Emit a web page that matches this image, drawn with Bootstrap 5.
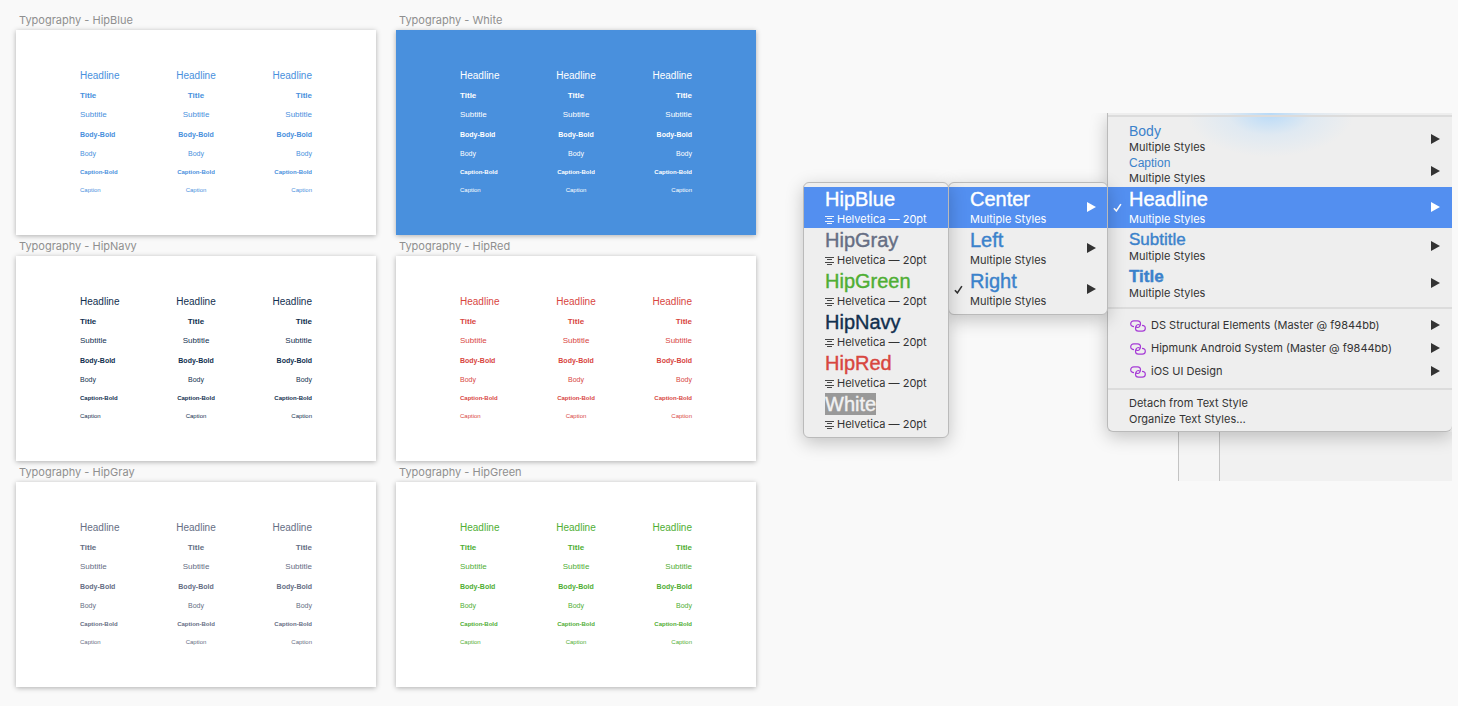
<!DOCTYPE html>
<html lang="en">
<head>
<meta charset="utf-8">
<meta name="viewport" content="width=device-width, initial-scale=1">
<title>Typography styles</title>
<link rel="stylesheet" href="https://cdn.jsdelivr.net/npm/bootstrap@5.3.0/dist/css/bootstrap.min.css">
<style>
  :root { --ui: Inter, "Liberation Sans", sans-serif; --type: "Liberation Sans", Arial, sans-serif; }
  body { background: #f9f9f9; font-family: var(--ui); }

  /* Artboards */
  .page-area { padding: 12px 6px 16px 16px; gap: 23px; }
  .boards { display: grid; grid-template-columns: 1fr 1fr; column-gap: 20px; row-gap: 3px; }
  .board-name { font-size: 11px; line-height: 16px; height: 18px; color: #8f8f8f; padding-left: 3px; margin: 0; font-weight: 400; }
  .artboard { background: #fff; height: 205px; padding: 35px 64px 0; box-shadow: 0 1px 5px rgba(0,0,0,.3); font-family: var(--type); }
  .specimen { display: grid; grid-template-columns: 1fr 1fr 1fr; line-height: 19px; }
  .specimen > :nth-child(3n+2) { text-align: center; }
  .specimen > :nth-child(3n) { text-align: right; }
  .t-headline { font-size: 10px; line-height: 21px; }
  .t-title { font-size: 8px; font-weight: 700; }
  .t-subtitle { font-size: 8px; line-height: 20px; }
  .t-bodybold { font-size: 7px; font-weight: 700; }
  .t-body { font-size: 7px; }
  .t-capbold { font-size: 6px; font-weight: 700; line-height: 18px; }
  .t-cap { font-size: 6px; line-height: 18px; }
  .c-blue { color: #4990dd; } .c-white { color: #fff; } .artboard.c-white { background: #4990dd; }
  .c-navy { color: #12304f; } .c-red { color: #d8463f; }
  .c-gray { color: #666e84; } .c-green { color: #4fae34; }

  /* Menus */
  .stage { margin-top: 101px; padding-left: 24px; overflow: hidden; }
  .menu-panel { background: #eee; border: 1px solid #bababa; border-radius: 6px; padding: 4px 0; box-shadow: 0 5px 18px rgba(0,0,0,.22); position: relative; }
  .menu-panel.sub { margin-top: 69px; }
  .m-colors { width: 146px; z-index: 3; }
  .m-align { width: 160px; z-index: 2; margin-left: -1px; }
  .m-main { width: 345px; z-index: 1; border-width: 0 0 1px 1px; border-radius: 0 0 6px 6px; padding: 2px 0 4px;
    background: radial-gradient(ellipse 84px 44px at 162px 0, #b8daf8, rgba(214,230,244,.6) 50%, rgba(238,238,238,0)) #eee; }
  .main-col { margin-left: -1px; }
  .item { display: grid; grid-template-columns: 21px 1fr 20px; align-items: center; width: 100%; border: 0; background: none; padding: 0; text-align: left; color: #333; }
  .m-main .item { grid-template-columns: 21px 1fr 21px; }
  .item.on { background: #538ff0; color: #fff; }
  .tick-cell { padding-left: 5px; }
  .arrow-icon { margin-bottom: 1px; }
  .lines-icon { margin-right: 3px; }
  .chain-icon { margin: 0 5px 0 1px; }
  .nm { display: block; font-family: var(--type); font-size: 20px; line-height: 25px; -webkit-text-stroke: .4px; }
  .sb { display: block; font-size: 11px; line-height: 15px; padding-bottom: 1px; white-space: nowrap; }
  .n-body { font-size: 14px; line-height: 17px; -webkit-text-stroke: 0; }
  .n-cap { font-size: 12px; line-height: 15px; -webkit-text-stroke: 0; }
  .n-sub, .n-title { font-size: 17px; line-height: 19px; padding-top: 2px; }
  .n-title { font-weight: 700; }
  .link-c { color: #3b82cb; }
  .rule { height: 2px; background: #dcdcdc; margin: 5px 0; border: 0; opacity: 1; }
  .rule:first-child { margin: 0 0 6px; }
  .lib { height: 23px; font-size: 11px; }
  .act { display: block; width: 100%; border: 0; background: none; padding: 0 0 0 21px; text-align: left; font-size: 11px; line-height: 16px; color: #333; }
  .sel { background: #999; color: #f2f2f2; }
  svg { display: block; }
  .canvas-strip { height: 49px; display: grid; grid-template-columns: 71px 41px 1fr; }
  .ruler { background: #f5f5f5; border-left: 1px solid #c4c4c4; }
  .canvas-bg { background: #f1f1f1; border-left: 1px solid #c4c4c4; }
</style>
<script src="https://cdn.jsdelivr.net/npm/bootstrap@5.3.0/dist/js/bootstrap.bundle.min.js"></script>
</head>
<body>
<svg width="0" height="0" class="position-absolute" aria-hidden="true">
  <symbol id="arrow" viewBox="0 0 9 10"><path d="M0 0L9 5L0 10Z" fill="currentColor"/></symbol>
  <symbol id="tick" viewBox="0 0 8 8"><path d="M.8 4.6L3 7L7 1" fill="none" stroke="currentColor" stroke-width="1.4"/></symbol>
  <symbol id="lines" viewBox="0 0 9 8"><path d="M0 .5H9M2 2.5H7M0 5.5H9M2 7.5H7" stroke="currentColor" stroke-width=".9"/></symbol>
  <symbol id="chain" viewBox="0 0 16 12"><path d="M4 6.600C2 6.600 .7 5.400 .7 3.700S2 .8 3.800 .8H7.600C9.400 .8 10.500 2.200 10.500 3.800S9.400 7.500 7.700 7.500C6.700 7.500 6.300 7 6.300 6.500M12 5.400C14 5.400 15.300 6.600 15.300 8.300S14 11.200 12.200 11.200H8.400C6.600 11.200 5.500 9.800 5.500 8.200S6.600 4.500 8.300 4.500C9.300 4.500 9.700 5 9.700 5.500" fill="none" stroke="#a63bd6" stroke-width="1.2"/></symbol>
</svg>
<main class="page-area d-flex align-items-start">
  <section class="boards flex-grow-1" id="boards"></section>
  <section class="stage d-flex align-items-start flex-shrink-0">
    <div class="menu-panel sub m-colors" id="colors"></div>
    <div class="menu-panel sub m-align" id="aligns"></div>
    <div class="main-col">
      <div class="menu-panel m-main" id="mainmenu"></div>
      <div class="canvas-strip"><span></span><span class="ruler"></span><span class="canvas-bg"></span></div>
    </div>
  </section>
</main>
<script>
const steps = [['t-headline','Headline'],['t-title','Title'],['t-subtitle','Subtitle'],['t-bodybold','Body-Bold'],['t-body','Body'],['t-capbold','Caption-Bold'],['t-cap','Caption']];
document.getElementById('boards').innerHTML = [['HipBlue','c-blue'],['White','c-white'],['HipNavy','c-navy'],['HipRed','c-red'],['HipGray','c-gray'],['HipGreen','c-green']].map(([n,c]) =>
  `<article><h2 class="board-name">Typography - ${n}</h2><div class="artboard ${c}"><div class="specimen">${steps.map(([k,t]) => `<span class="${k}">${t}</span>`.repeat(3)).join('')}</div></div></article>`).join('');
const icon = (id,w,h) => `<svg width="${w}" height="${h}" class="${id}-icon" aria-hidden="true"><use href="#${id}"/></svg>`;
const item = (name, cls, sub, o={}) => `<button type="button" class="item ${o.on?'on':''}"><span class="tick-cell">${o.tick?icon('tick',9,9):''}</span><span><span class="nm ${cls}">${o.sel?`<span class="sel">${name}</span>`:name}</span><span class="sb">${sub}</span></span><span>${o.arrow?icon('arrow',9,10):''}</span></button>`;
const font = `<span class="d-flex align-items-center">${icon('lines',9,8)}Helvetica — 20pt</span>`;
document.getElementById('colors').innerHTML = [['HipBlue','',{on:1}],['HipGray','c-gray'],['HipGreen','c-green'],['HipNavy','c-navy'],['HipRed','c-red'],['White','',{sel:1}]].map(([n,c,o]) => item(n,c,font,o)).join('');
const M = 'Multiple Styles';
document.getElementById('aligns').innerHTML = item('Center','',M,{on:1,arrow:1}) + item('Left','link-c',M,{arrow:1}) + item('Right','link-c',M,{tick:1,arrow:1});
const lib = t => `<button type="button" class="item lib"><span></span><span class="d-flex align-items-center">${icon('chain',16,12)}${t}</span>${icon('arrow',9,10)}</button>`;
document.getElementById('mainmenu').innerHTML = `<hr class="rule">` + item('Body','link-c n-body',M,{arrow:1}) + item('Caption','link-c n-cap',M,{arrow:1}) +
  item('Headline','',M,{on:1,tick:1,arrow:1}) + item('Subtitle','link-c n-sub',M,{arrow:1}) + item('Title','link-c n-title',M,{arrow:1}) +
  `<hr class="rule">` + lib('DS Structural Elements (Master @ f9844bb)') + lib('Hipmunk Android System (Master @ f9844bb)') + lib('iOS UI Design') +
  `<hr class="rule"><button type="button" class="act">Detach from Text Style</button><button type="button" class="act">Organize Text Styles…</button>`;
</script>
</body>
</html>
